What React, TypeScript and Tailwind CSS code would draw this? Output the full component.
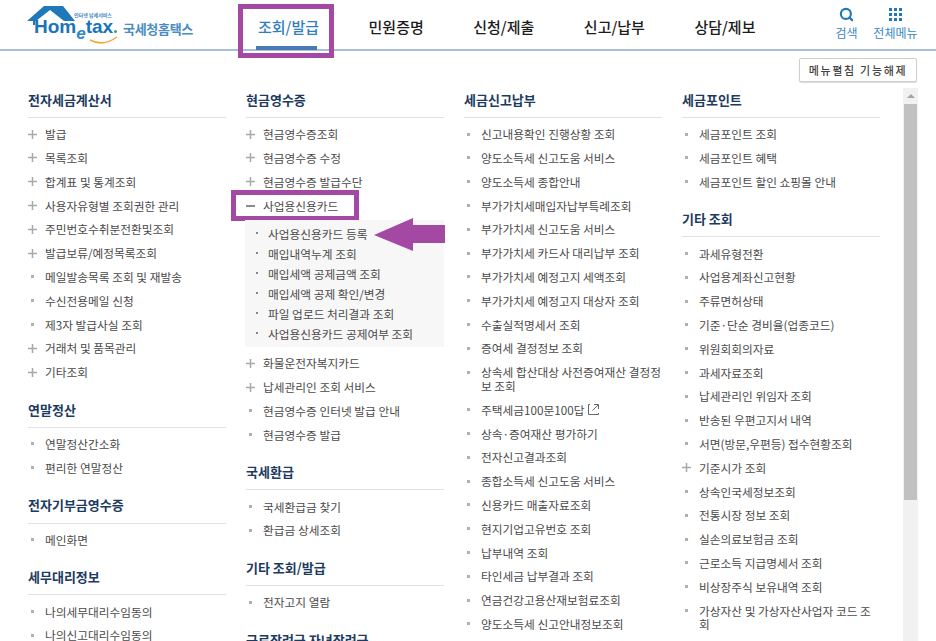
import React from "react";
import { Search } from "lucide-react";

type Item = { t: string; k?: "p" | "s"; ext?: boolean };
type Sec = { h: string; items: Item[] };

const P = (t: string): Item => ({ t, k: "p" });
const S = (t: string): Item => ({ t, k: "s" });

const columns: Sec[][] = [
  [
    { h: "전자세금계산서", items: [P("발급"), P("목록조회"), P("합계표 및 통계조회"), P("사용자유형별 조회권한 관리"), P("주민번호수취분전환및조회"), P("발급보류/예정목록조회"), S("메일발송목록 조회 및 재발송"), S("수신전용메일 신청"), S("제3자 발급사실 조회"), P("거래처 및 품목관리"), P("기타조회")] },
    { h: "연말정산", items: [S("연말정산간소화"), S("편리한 연말정산")] },
    { h: "전자기부금영수증", items: [S("메인화면")] },
    { h: "세무대리정보", items: [S("나의세무대리수임동의"), S("나의신고대리수임동의")] },
  ],
  [
    { h: "현금영수증", items: [P("현금영수증조회"), P("현금영수증 수정"), P("현금영수증 발급수단")] },
  ],
  [
    { h: "세금신고납부", items: ["신고내용확인 진행상황 조회", "양도소득세 신고도움 서비스", "양도소득세 종합안내", "부가가치세매입자납부특례조회", "부가가치세 신고도움 서비스", "부가가치세 카드사 대리납부 조회", "부가가치세 예정고지 세액조회", "부가가치세 예정고지 대상자 조회", "수출실적명세서 조회", "증여세 결정정보 조회", "상속세 합산대상 사전증여재산 결정정보 조회"].map(S).concat([{ t: "주택세금100문100답", k: "s", ext: true }], ["상속·증여재산 평가하기", "전자신고결과조회", "종합소득세 신고도움 서비스", "신용카드 매출자료조회", "현지기업고유번호 조회", "납부내역 조회", "타인세금 납부결과 조회", "연금건강고용산재보험료조회", "양도소득세 신고안내정보조회"].map(S)) },
  ],
  [
    { h: "세금포인트", items: [S("세금포인트 조회"), S("세금포인트 혜택"), S("세금포인트 할인 쇼핑몰 안내")] },
    { h: "기타 조회", items: [S("과세유형전환"), S("사업용계좌신고현황"), S("주류면허상태"), S("기준·단순 경비율(업종코드)"), S("위원회회의자료"), S("과세자료조회"), S("납세관리인 위임자 조회"), S("반송된 우편고지서 내역"), S("서면(방문,우편등) 접수현황조회"), P("기준시가 조회"), S("상속인국세정보조회"), S("전통시장 정보 조회"), S("실손의료보험금 조회"), S("근로소득 지급명세서 조회"), S("비상장주식 보유내역 조회"), S("가상자산 및 가상자산사업자 코드 조회")] },
  ],
];

const sub = ["사업용신용카드 등록", "매입내역누계 조회", "매입세액 공제금액 조회", "매입세액 공제 확인/변경", "파일 업로드 처리결과 조회", "사업용신용카드 공제여부 조회"];
const nav = ["민원증명", "신청/제출", "신고/납부", "상담/제보"];
const font = "font-['Noto_Sans_CJK_KR','Noto_Sans',sans-serif]";

function PlusIcon() {
  return (
    <svg width="9" height="9" viewBox="0 0 9 9" className="shrink-0">
      <path d="M3.75 0h1.5v3.75H9v1.5H5.25V9h-1.5V5.25H0v-1.5h3.75z" fill="#a8a8a8" />
    </svg>
  );
}

function Row({ item }: { item: Item }) {
  return (
    <li className="flex py-[5px] text-[11.7px] leading-[13.8px] text-[#4a4a4a]">
      <span className="flex h-[13.8px] w-[17px] shrink-0 items-center">
        {item.k === "p" ? <PlusIcon /> : <span className="ml-[3px] h-[3px] w-[3px] bg-[#b0b0b0]" />}
      </span>
      <span className="flex items-center gap-[3px]">
        {item.t}
        {item.ext && (
          <svg width="13" height="13" viewBox="0 0 13 13" fill="none" stroke="#666" strokeWidth="1">
            <path d="M3 1.5H1.5v10h10V10M7 1.5h4.5V6M11 2L5.5 7.5" />
          </svg>
        )}
      </span>
    </li>
  );
}

function Section({ sec }: { sec: Sec }) {
  return (
    <section className="mb-[8.9px]">
      <h3 className="flex h-[35px] items-center border-b border-[#e2e2e2] pb-px text-[13px] font-bold text-[#1d3a5f]">{sec.h}</h3>
      <ul className="mt-[4.2px]">
        {sec.items.map((i) => (
          <Row key={i.t} item={i} />
        ))}
      </ul>
    </section>
  );
}

function Logo() {
  return (
    <div className="relative h-[49px] w-[167px] shrink-0">
      <svg width="50" height="28" viewBox="0 0 50 28" className="absolute left-0 top-0">
        <path d="M0 21L17 6h19l12 15H37L23 10 9 21z" fill="#1f78ba" />
        <path d="M7 20v5" stroke="#1f78ba" strokeWidth="2" />
      </svg>
      <div className="absolute left-[47px] top-[12px] whitespace-nowrap text-[5px] font-bold leading-[6px] text-[#3f86c0]">인터넷 납세서비스</div>
      <div className="absolute left-[7px] top-[18px] flex items-baseline whitespace-nowrap font-['Liberation_Sans',sans-serif] font-bold leading-[18px] text-[#1a74b8]">
        <span className="text-[19px]">Hom</span>
        <span className="translate-y-[6px] text-[17px] italic text-[#2c8ac9]">e</span>
        <span className="text-[19px]">tax</span>
        <span className="ml-[1px] h-[3px] w-[3px] rounded-full bg-[#3aa655]" />
      </div>
      <svg width="30" height="9" viewBox="0 0 30 9" className="absolute left-[62px] top-[36px]">
        <path d="M1 4Q14 11 28 1" stroke="#f0a93c" strokeWidth="1.5" fill="none" />
      </svg>
      <div className="absolute left-[96px] top-[20px] whitespace-nowrap text-[13px] font-bold leading-[18px] tracking-[-0.3px] text-[#4a8cc4]">국세청홈택스</div>
    </div>
  );
}

export default function App() {
  return (
    <div className={`relative h-[641px] w-[936px] overflow-hidden bg-white ${font}`}>
      <header className="flex h-[51px] items-start border-b-2 border-[#a9bed8] pl-[27px]">
        <Logo />
        <nav className="ml-[64px] flex h-[49px] items-start gap-[49.5px] text-[15px] font-medium text-[#1c1c1c]">
          <a className="relative flex h-[49px] pt-[15px] leading-[24px] text-[#2f7fc0]">
            조회/발급
            <span className="absolute bottom-[-1px] left-[-2px] h-[4px] w-[61px] bg-[#4a7ab5]" />
          </a>
          {nav.map((n) => (
            <a key={n} className="flex pt-[15px] leading-[24px]">{n}</a>
          ))}
        </nav>
        <div className="ml-[79px] flex pt-[7px] text-[12px] leading-[14px] text-[#3a87c4]">
          <div className="flex w-[24px] flex-col items-center whitespace-nowrap">
            <Search size={15} strokeWidth={3.4} className="mb-[4px] text-[#1f78ba]" />
            검색
          </div>
          <div className="ml-[14px] flex w-[46px] flex-col items-center whitespace-nowrap">
            <span className="mb-[5px] mt-px grid h-[13px] w-[13px] grid-cols-3 gap-[2px]">
              {Array.from({ length: 9 }).map((_, i) => (
                <span key={i} className="h-[3px] w-[3px] bg-[#1f78ba]" />
              ))}
            </span>
            전체메뉴
          </div>
        </div>
      </header>

      <div className="flex h-[32px] justify-end pr-[19px] pt-[7px]">
        <button className="h-[24px] w-[118px] whitespace-nowrap rounded-[2px] border border-[#cfcfcf] bg-white text-[11px] font-medium tracking-[1.7px] text-[#444] shadow-[0_1px_1px_rgba(0,0,0,0.15)]">
          메뉴펼침 기능해제
        </button>
      </div>

      <main className="flex">
        <div className="flex w-[903px] shrink-0 gap-[20px] pl-[28px] pr-[22px]">
          {columns.map((col, ci) => (
            <div key={ci} className="w-[198px] shrink-0">
              {col.map((s) => (
                <Section key={s.h} sec={s} />
              ))}
              {ci === 1 && (
                <>
                  <div className="mt-[-8.6px]">
                    <div className="relative flex h-[26.5px] items-center pb-[3px] text-[11.7px] text-[#4a4a4a]">
                      <span className="mr-[8px] h-[2px] w-[9px] bg-[#8a8a8a]" />
                      사업용신용카드
                      <span className="absolute left-[-15px] top-[-4px] h-[31px] w-[128px] border-[5px] border-[#a349a4]" />
                    </div>
                    <ul className="relative ml-[-1px] h-[127px] bg-[#f7f7f7] pl-[11px] pt-[3px]">
                      {sub.map((t) => (
                        <li key={t} className="flex h-[20px] items-center text-[11.7px] text-[#4a4a4a]">
                          <span className="mr-[10px] h-[2px] w-[2px] bg-[#888]" />
                          {t}
                        </li>
                      ))}
                      <svg width="71" height="33" viewBox="0 0 71 33" className="absolute right-[-1px] top-[-2px]">
                        <path d="M0 17L39 0v7h32v18H39v8z" fill="#a349a4" />
                      </svg>
                    </ul>
                  </div>
                  <ul className="mb-[8.9px] mt-[4px]">
                    {[P("화물운전자복지카드"), P("납세관리인 조회 서비스"), S("현금영수증 인터넷 발급 안내"), S("현금영수증 발급")].map((i) => (
                      <Row key={i.t} item={i} />
                    ))}
                  </ul>
                  <Section sec={{ h: "국세환급", items: [S("국세환급금 찾기"), S("환급금 상세조회")] }} />
                  <Section sec={{ h: "기타 조회/발급", items: [S("전자고지 열람")] }} />
                  <Section sec={{ h: "근로장려금 자녀장려금", items: [] }} />
                </>
              )}
            </div>
          ))}
        </div>
        <div className="mt-[5px] h-[560px] w-[15px] shrink-0 bg-[#f1f1f1]">
          <div className="flex h-[16px] items-center justify-center">
            <span className="h-0 w-0 border-x-[4px] border-b-[4px] border-x-transparent border-b-[#a3a3a3]" />
          </div>
          <div className="mx-px h-[396px] bg-[#c1c1c1]" />
        </div>
      </main>

      <div className="pointer-events-none absolute left-[238px] top-[4px] h-[54px] w-[96px] border-[5px] border-[#a349a4]" />
    </div>
  );
}
